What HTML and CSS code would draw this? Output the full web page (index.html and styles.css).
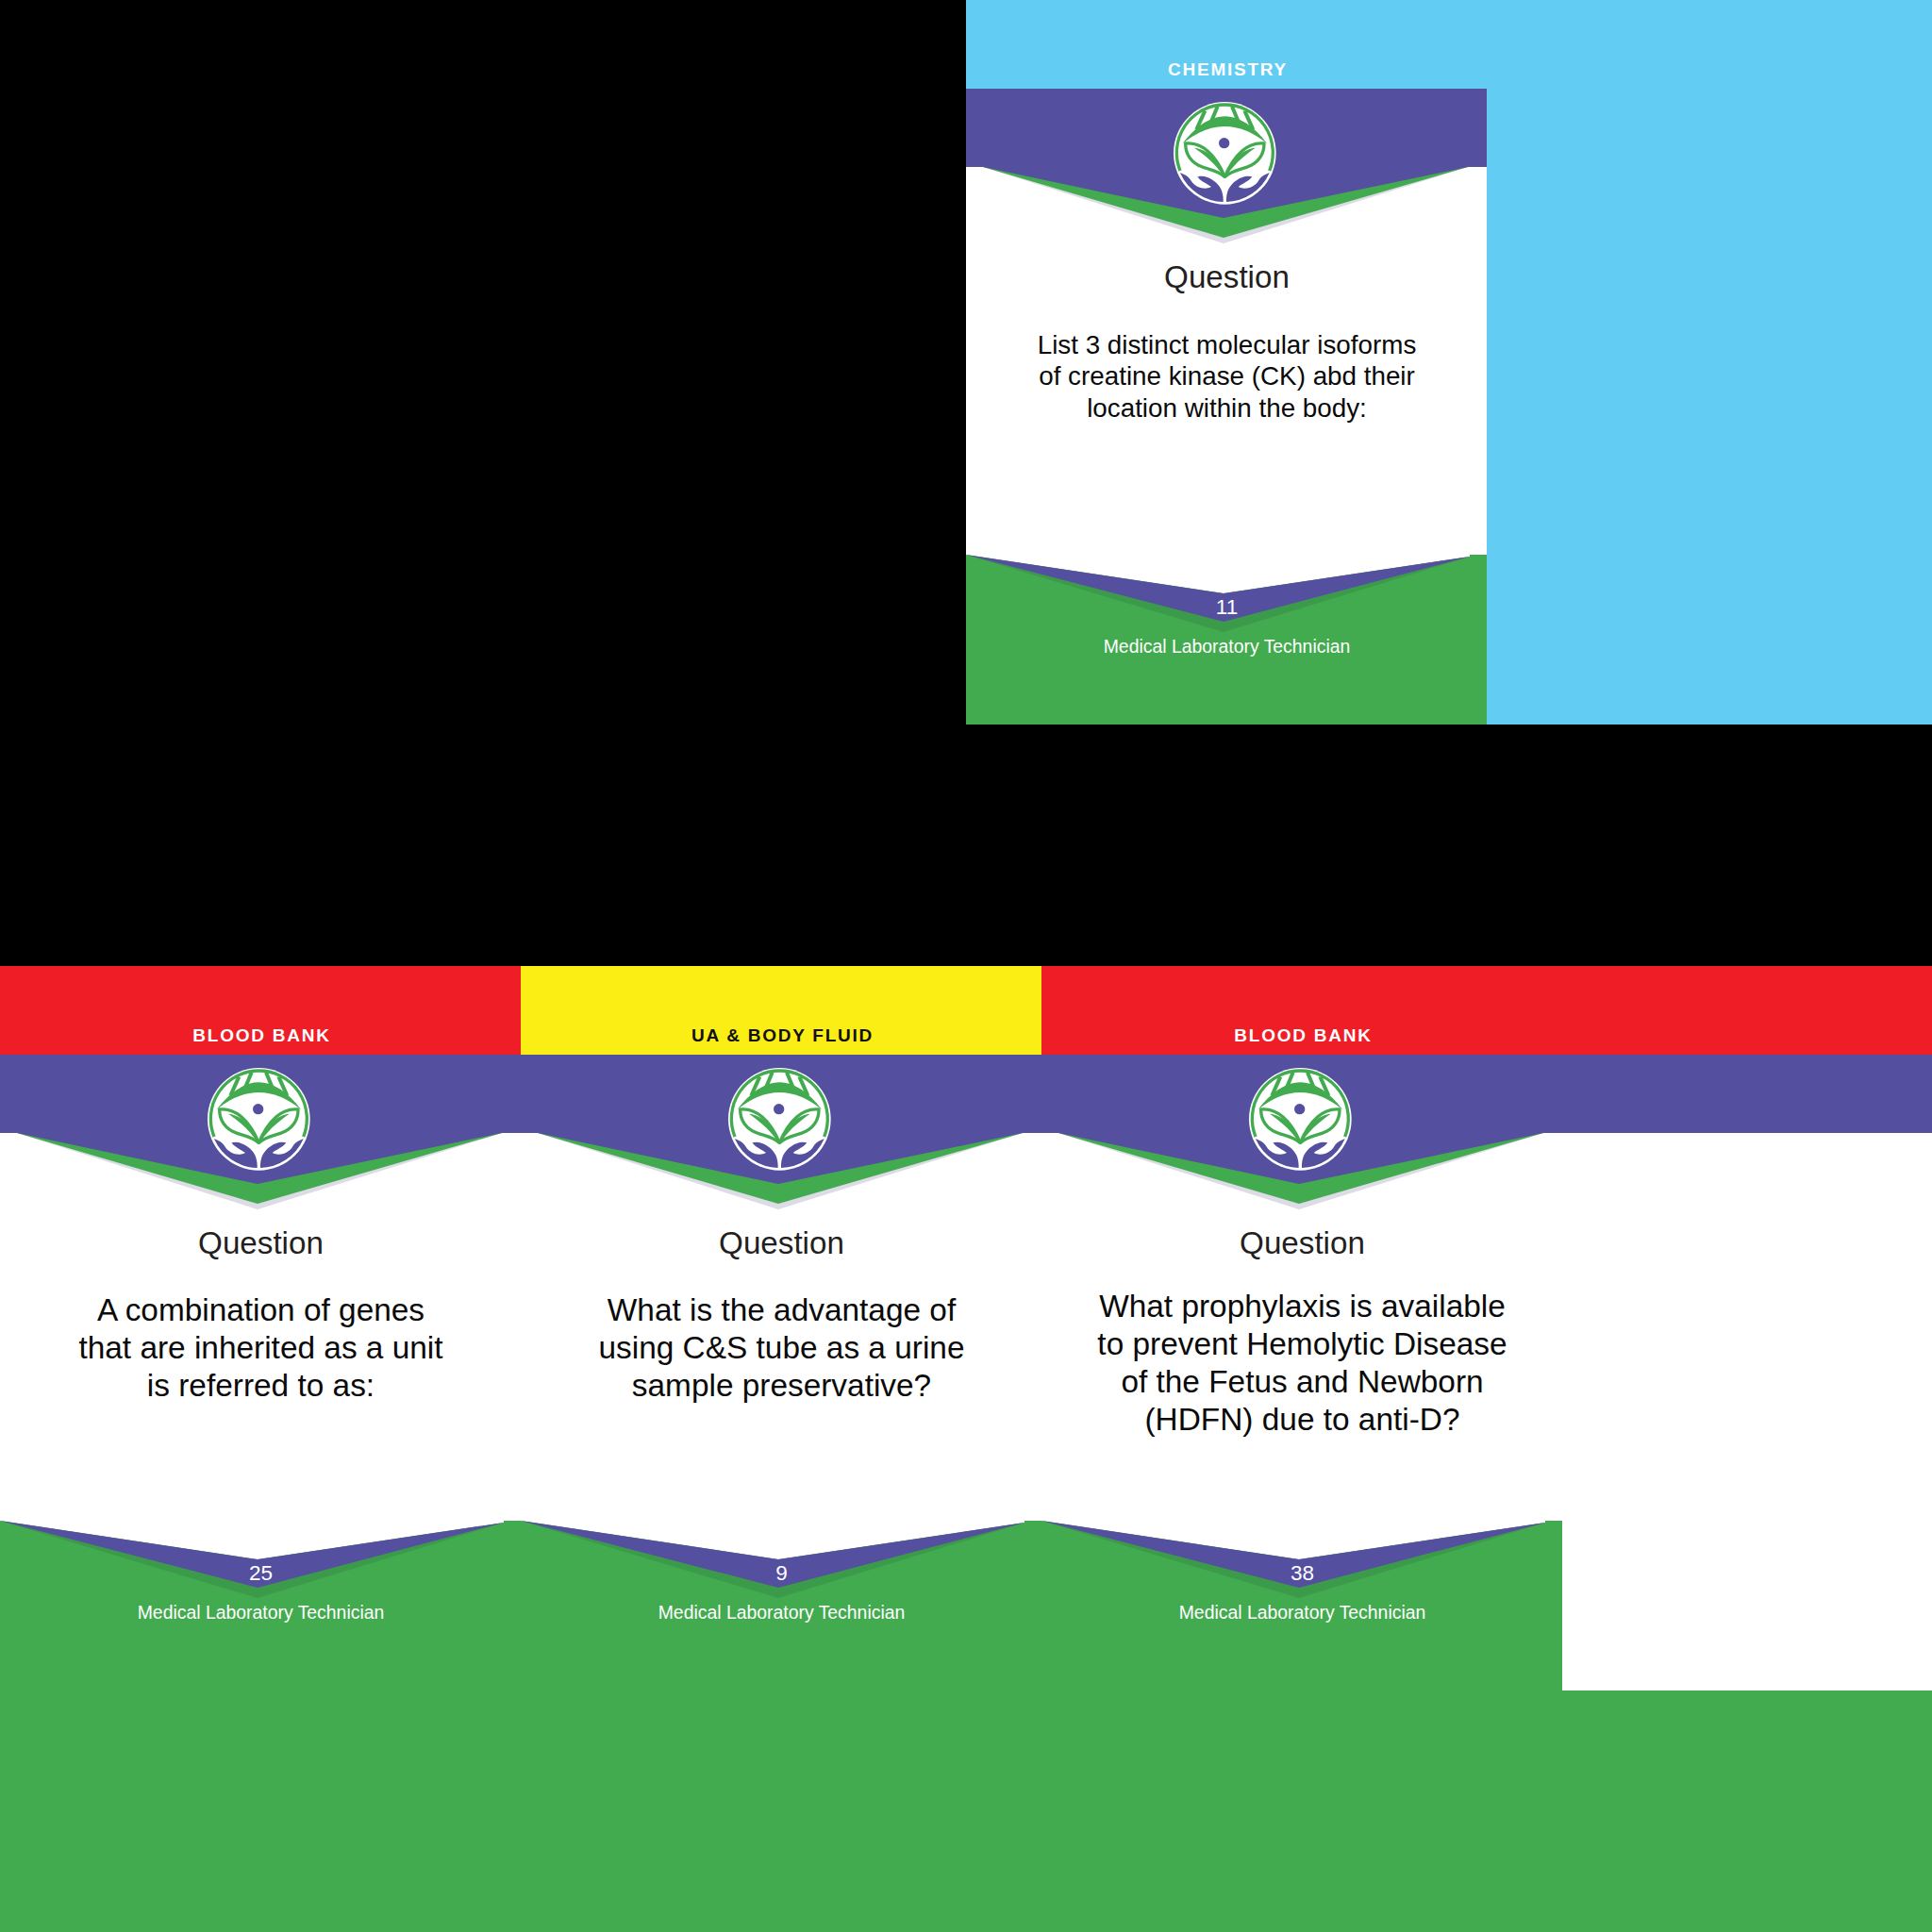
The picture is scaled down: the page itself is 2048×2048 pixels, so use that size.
FILE: index.html
```html
<!DOCTYPE html>
<html lang="en">
<head>
<meta charset="utf-8">
<title>Flashcards</title>
<link rel="stylesheet" href="styles.css">
</head>
<body>
<svg class="defs" width="0" height="0" aria-hidden="true">
  <symbol id="logo" viewBox="0 0 480 390">
    <circle cx="235" cy="187" r="163" fill="#fff"/>
    <g fill="none" stroke="#43ab4f" stroke-width="10">
      <path d="M93 243A153 153 0 1 1 377 243"/>
      <path d="M193 84L212 38M277 84L258 38M145 112L172 52M325 112L298 52" stroke-width="12"/>
    </g>
    <path d="M100 157Q235 -17 370 157Q235 47 100 157Z" fill="#43ab4f"/>
    <circle cx="233" cy="155" r="17" fill="#544f9f"/>
    <g fill="none" stroke="#43ab4f" stroke-width="10" stroke-linejoin="round">
      <path d="M110 156C160 150 205 190 235 262C205 238 178 240 150 225C120 208 110 185 110 156Z"/>
      <path d="M360 156C310 150 265 190 235 262C265 238 292 240 320 225C350 208 360 185 360 156Z"/>
    </g>
    <path d="M138 170C178 174 220 210 235 268C212 228 178 198 138 170Z" fill="#43ab4f"/>
    <path d="M332 170C292 174 250 210 235 268C258 228 292 198 332 170Z" fill="#43ab4f"/>
    <path d="M93 250A155 155 0 0 0 230 342C231 312 222 290 198 274C182 262 165 258 148 262C158 276 172 280 192 294C170 306 140 295 128 275C118 260 106 254 93 250Z" fill="#544f9f"/>
    <path d="M377 250A155 155 0 0 1 240 342C239 312 248 290 272 274C288 262 305 258 322 262C312 276 298 280 278 294C300 306 330 295 342 275C352 260 364 254 377 250Z" fill="#544f9f"/>
  </symbol>
  <symbol id="top-chevron" viewBox="0 0 552 84">
    <polygon points="18,0 273,81 532,0" fill="#dcdbe6"/>
    <polygon points="18,0 273,75 532,0" fill="#43ab4f"/>
    <polygon points="18,0 273,54 532,0" fill="#544f9f"/>
  </symbol>
  <symbol id="foot-chevron" viewBox="0 0 552 84">
    <polygon points="0,0 273,82 534,2" fill="#3c9b4a"/>
    <polygon points="0,0 534,0 534,2 273,41" fill="#fff"/>
    <polygon points="0,0 273,41 534,2 273,71" fill="#544f9f"/>
  </symbol>
</svg>

<main class="sheet">
  <section class="row row-top">
    <div class="spacer"></div>
    <article class="card">
      <div class="band band-sky">CHEMISTRY</div>
      <div class="head">
        <svg class="chevron"><use href="#top-chevron"/></svg>
        <svg class="logo"><use href="#logo"/></svg>
      </div>
      <div class="body">
        <h2 class="title">Question</h2>
        <p class="text text-small">List 3 distinct molecular isoforms<br>of creatine kinase (CK) abd their<br>location within the body:</p>
      </div>
      <div class="foot">
        <svg class="foot-chevron"><use href="#foot-chevron"/></svg>
        <div class="num">11</div>
        <div class="role">Medical Laboratory Technician</div>
      </div>
    </article>
    <div class="filler-sky"></div>
  </section>

  <div class="gap"></div>

  <section class="row row-bottom">
    <article class="card">
      <div class="band band-red">BLOOD BANK</div>
      <div class="head">
        <svg class="chevron"><use href="#top-chevron"/></svg>
        <svg class="logo"><use href="#logo"/></svg>
      </div>
      <div class="body">
        <h2 class="title">Question</h2>
        <p class="text">A combination of genes<br>that are inherited as a unit<br>is referred to as:</p>
      </div>
      <div class="foot">
        <svg class="foot-chevron"><use href="#foot-chevron"/></svg>
        <div class="num">25</div>
        <div class="role">Medical Laboratory Technician</div>
      </div>
    </article>
    <article class="card">
      <div class="band band-yellow">UA &amp; BODY FLUID</div>
      <div class="head">
        <svg class="chevron"><use href="#top-chevron"/></svg>
        <svg class="logo"><use href="#logo"/></svg>
      </div>
      <div class="body">
        <h2 class="title">Question</h2>
        <p class="text">What is the advantage of<br>using C&amp;S tube as a urine<br>sample preservative?</p>
      </div>
      <div class="foot">
        <svg class="foot-chevron"><use href="#foot-chevron"/></svg>
        <div class="num">9</div>
        <div class="role">Medical Laboratory Technician</div>
      </div>
    </article>
    <article class="card">
      <div class="band band-red">BLOOD BANK</div>
      <div class="head">
        <svg class="chevron"><use href="#top-chevron"/></svg>
        <svg class="logo"><use href="#logo"/></svg>
      </div>
      <div class="body">
        <h2 class="title">Question</h2>
        <p class="text text-long">What prophylaxis is available<br>to prevent Hemolytic Disease<br>of the Fetus and Newborn<br>(HDFN) due to anti-D?</p>
      </div>
      <div class="foot">
        <svg class="foot-chevron"><use href="#foot-chevron"/></svg>
        <div class="num">38</div>
        <div class="role">Medical Laboratory Technician</div>
      </div>
    </article>
    <div class="filler-col">
      <div class="band band-red"></div>
      <div class="head"></div>
      <div class="body"></div>
    </div>
  </section>
</main>
</body>
</html>
```
FILE: styles.css
```css
* { box-sizing: border-box; }

html, body {
  margin: 0;
  padding: 0;
  background: #000;
}

body {
  width: 2048px;
  height: 2048px;
  overflow: hidden;
  font-family: "Liberation Sans", Arial, sans-serif;
}

.defs { display: block; height: 0; }

.sheet {
  display: flex;
  flex-direction: column;
  width: 2048px;
  height: 2048px;
}

.row { display: flex; flex: none; }
.row-top { height: 768px; }
.gap { height: 256px; flex: none; }
.row-bottom {
  height: 1024px;
  align-items: flex-start;
  background: #43ab4f;
}

.spacer { width: 1024px; flex: none; }
.filler-sky { flex: 1; background: #62ccf3; }

.card,
.filler-col {
  display: flex;
  flex-direction: column;
  height: 768px;
}

.card { width: 552px; flex: none; }
.filler-col { flex: 1; }

.band {
  flex: none;
  height: 93.5px;
  padding: 0 0 10px 3px;
  display: flex;
  align-items: flex-end;
  justify-content: center;
  font-size: 19px;
  font-weight: 700;
  line-height: 20px;
  letter-spacing: 1.75px;
  color: #fff;
}

.band-sky { background: #62ccf3; }
.band-red { background: #ee1d26; }
.band-yellow { background: #fbee15; color: #111; }

.head {
  flex: none;
  height: 83.5px;
  position: relative;
  background: #544f9f;
}

.chevron {
  position: absolute;
  left: 0;
  top: 100%;
  width: 552px;
  height: 84px;
  z-index: 1;
}

.logo {
  position: absolute;
  left: 196px;
  top: 6.5px;
  width: 160px;
  height: 130px;
  z-index: 2;
}

.body {
  flex: 1;
  background: #fff;
  padding: 97px 0 0 1px;
  text-align: center;
}

.title {
  margin: 0;
  font-size: 33.2px;
  font-weight: 400;
  line-height: 40px;
  color: #231f20;
}

.text {
  margin: 31px 0 0;
  font-size: 33.4px;
  line-height: 40px;
  color: #0a0a0a;
}

.text-small {
  margin-top: 35px;
  font-size: 27.8px;
  line-height: 33.4px;
}

.text-long { margin-top: 27px; }

.foot {
  flex: none;
  height: 180px;
  position: relative;
  background: #43ab4f;
  text-align: center;
  color: #fff;
  padding: 44px 0 0 1px;
}

.foot-chevron {
  position: absolute;
  left: 0;
  top: 0;
  width: 552px;
  height: 84px;
}

.num {
  position: relative;
  font-size: 22.5px;
  line-height: 24px;
}

.role {
  position: relative;
  margin-top: 17px;
  font-size: 19.4px;
  line-height: 24px;
}
```
